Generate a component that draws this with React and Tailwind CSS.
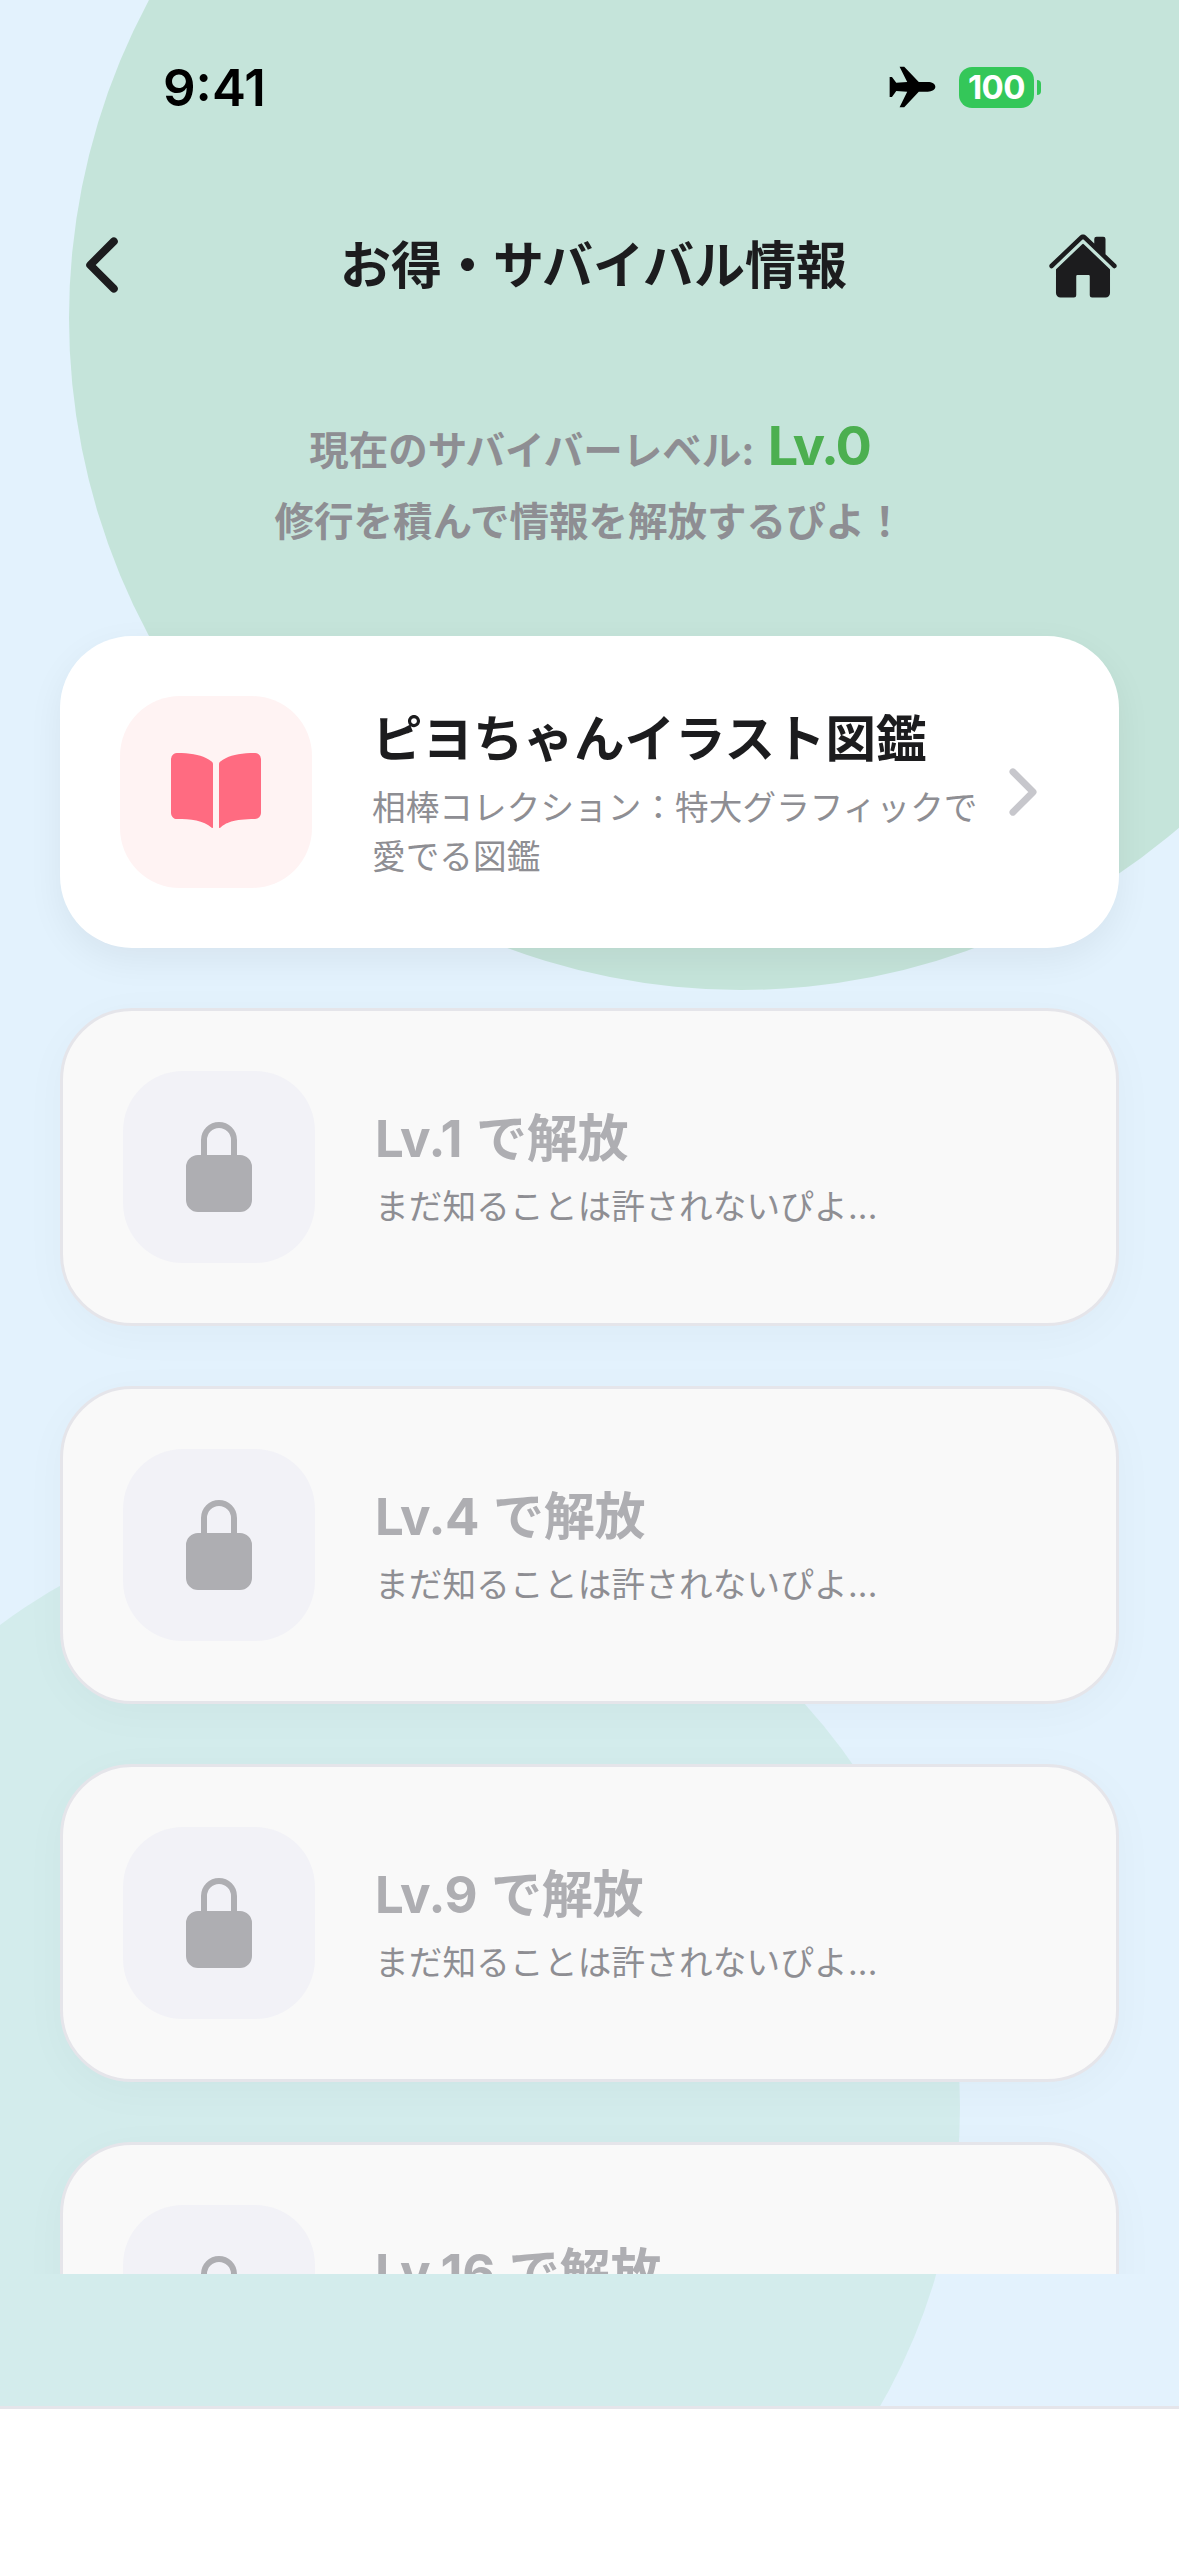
import React from 'react';
import { IoChevronBack, IoChevronForward, IoHome, IoBook, IoLockClosed } from 'react-icons/io5';

const locked = ['Lv.1 で解放', 'Lv.4 で解放', 'Lv.9 で解放', 'Lv.16 で解放'];

function Airplane() {
  return (
    <svg viewBox="85 50 148 132" className="w-[49px] h-[44px]">
      <path
        fill="#000"
        d="M228 115C228 107 218 101 205 101L178 101L134 55L120 55L143 101L110 103L97 86L90 86L90 146L97 146L110 128L143 130L120 177L134 177L178 130L205 130C218 130 228 123 228 115Z"
      />
    </svg>
  );
}

function LockedCard({ title }) {
  return (
    <div className="flex items-center gap-[60px] p-[60px] bg-[#f9f9f9] border-[3px] border-[#e5e5ea] rounded-[72px] shadow-[0_9px_45px_rgba(0,0,0,0.03)] shrink-0">
      <div className="w-[192px] h-[192px] rounded-[60px] bg-[#f2f2f7] flex items-center justify-center shrink-0">
        <IoLockClosed size={96} color="#aeaeb2" />
      </div>
      <div className="flex-1 pt-[6px]">
        <div className="text-[51px] leading-[60px] font-bold text-[#aeaeb2] tracking-[-0.3px] [word-spacing:2px]">{title}</div>
        <div className="mt-[14px] text-[33.6px] leading-[48px] text-[#8e8e93] tracking-[0.2px]">まだ知ることは許されないぴよ...</div>
      </div>
    </div>
  );
}

export default function App() {
  return (
    <div className="relative w-[1179px] h-[2556px] overflow-hidden flex flex-col bg-[#e3f2fd] font-['Inter','Noto_Sans_CJK_JP',sans-serif]">
      {/* background blobs */}
      <div className="absolute left-[69px] top-[-354px] w-[1344px] h-[1344px] rounded-full bg-[#c5e4da]" />
      <div className="absolute left-[-242px] top-[1506px] w-[1202px] h-[1202px] rounded-full bg-[#d3ecec]" />

      {/* status bar */}
      <div className="relative h-[177px] shrink-0 flex items-center justify-between pl-[163px] pr-[138px] pb-[3px]">
        <span className="text-[51px] font-semibold text-black leading-none">9:41</span>
        <div className="flex items-center gap-[22px]">
          <Airplane />
          <div className="flex items-center gap-[3px]">
            <div className="w-[75px] h-[41px] rounded-[13px] bg-[#34c759] flex items-center justify-center text-[33px] font-bold text-white leading-none tracking-[-0.5px]">100</div>
            <div className="w-[4px] h-[15px] rounded-r-full bg-[#34c759]" />
          </div>
        </div>
      </div>

      {/* header */}
      <div className="relative h-[178px] shrink-0 flex items-center justify-between px-[60px]">
        <IoChevronBack size={84} color="#1c1c1e" className="-mt-[3px]" />
        <h1 className="text-[51px] font-bold text-[#1c1c1e] ml-[8px]">お得・サバイバル情報</h1>
        <div className="w-[84px] flex justify-end">
          <IoHome size={72} color="#1c1c1e" />
        </div>
      </div>

      {/* level text */}
      <div className="relative mt-[55px] shrink-0 text-center font-bold text-[39.5px] leading-[71px] text-[#8e8e93]">
        <div>
          現在のサバイバーレベル: <span className="text-[54px] text-[#4caf50] tracking-[-2px] ml-[4px]">Lv.0</span>
        </div>
        <div>修行を積んで情報を解放するぴよ！</div>
      </div>

      {/* list */}
      <div className="relative mt-[6px] flex-1 overflow-hidden px-[60px] pt-[72px] flex flex-col gap-[60px]">
        <div className="flex items-center p-[60px] bg-white rounded-[72px] shadow-[0_12px_36px_rgba(0,0,0,0.06)] shrink-0">
          <div className="w-[192px] h-[192px] rounded-[60px] bg-[#fff3f3] flex items-center justify-center shrink-0">
            <IoBook size={96} color="#ff6b81" />
          </div>
          <div className="ml-[60px] w-[620px] pt-[5px]">
            <div className="text-[50.5px] leading-[60px] font-bold text-[#1c1c1e]">ピヨちゃんイラスト図鑑</div>
            <div className="mt-[14px] text-[33.6px] leading-[49px] text-[#8e8e93] tracking-[0.1px]">相棒コレクション：特大グラフィックで愛でる図鑑</div>
          </div>
          <IoChevronForward size={72} color="#c7c7cc" className="shrink-0 -ml-[4px]" />
        </div>
        {locked.map((title) => (
          <LockedCard key={title} title={title} />
        ))}
      </div>

      {/* bottom area */}
      <div className="relative h-[132px] shrink-0" />
      <div className="relative h-[150px] shrink-0 bg-white border-t-[3px] border-[#e5e5ea]" />
    </div>
  );
}
